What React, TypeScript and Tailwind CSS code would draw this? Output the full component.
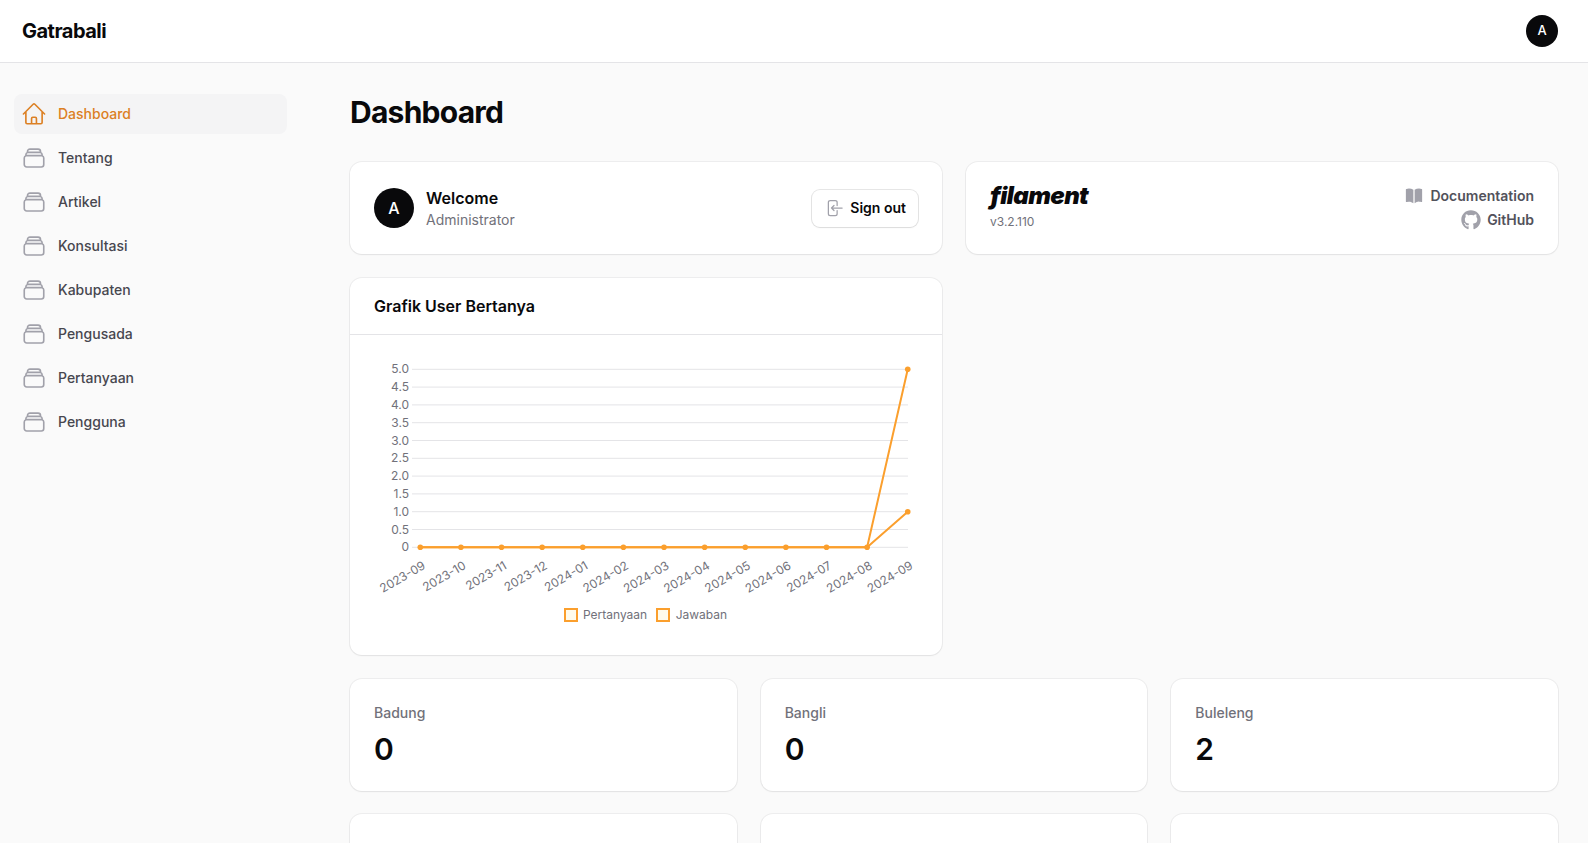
import { FaGithub } from 'react-icons/fa'

const navItems = ['Tentang', 'Artikel', 'Konsultasi', 'Kabupaten', 'Pengusada', 'Pertanyaan', 'Pengguna']

const stats = [
  { label: 'Badung', value: '0' },
  { label: 'Bangli', value: '0' },
  { label: 'Buleleng', value: '2' },
]

const months = [
  '2023-09', '2023-10', '2023-11', '2023-12', '2024-01', '2024-02', '2024-03',
  '2024-04', '2024-05', '2024-06', '2024-07', '2024-08', '2024-09',
]

const yTicks = ['5.0', '4.5', '4.0', '3.5', '3.0', '2.5', '2.0', '1.5', '1.0', '0.5', '0']

const ORANGE = '#fb9f2d'
const xAt = (i: number) => 420.3 + i * 40.62
const yAt = (v: number) => 547.3 - v * 35.6

function StackIcon() {
  return (
    <svg className="w-[26px] h-[26px] shrink-0 text-[#a1a1aa]" fill="none" viewBox="0 0 24 24" stroke="currentColor" strokeWidth={1.5}>
      <path strokeLinecap="round" strokeLinejoin="round" d="M6 6.878V6a2.25 2.25 0 0 1 2.25-2.25h7.5A2.25 2.25 0 0 1 18 6v.878m-12 0c.235-.083.487-.128.75-.128h10.5c.263 0 .515.045.75.128m-12 0A2.25 2.25 0 0 0 4.5 9v.878m13.5-3A2.25 2.25 0 0 1 19.5 9v.878m0 0a2.246 2.246 0 0 0-.75-.128H5.25c-.263 0-.515.045-.75.128m15 0A2.25 2.25 0 0 1 21 12v6a2.25 2.25 0 0 1-2.25 2.25H5.25A2.25 2.25 0 0 1 3 18v-6c0-.98.626-1.813 1.5-2.122" />
    </svg>
  )
}

function Chart() {
  const flat = months.slice(0, 12).map((_, i) => `${xAt(i)},${yAt(0)}`)
  const line = (last: number) => [...flat, `${xAt(12)},${yAt(last)}`].join(' ')

  return (
    <svg viewBox="374 359 544 272" className="block w-[544px] h-[272px]" style={{ fontFamily: 'Inter, sans-serif' }}>
      {yTicks.map((label, i) => {
        const y = 369.3 + i * 17.8
        return (
          <g key={label}>
            <line x1={412} x2={908} y1={y} y2={y} stroke="#e4e4e7" strokeWidth={1} />
            <text x={409} y={y + 4} textAnchor="end" fontSize={12} fill="#71717a">{label}</text>
          </g>
        )
      })}
      {months.map((m, i) => (
        <text key={i} x={xAt(i) + 6} y={568} textAnchor="end" fontSize={12} fill="#71717a" transform={`rotate(-30 ${xAt(i) + 6} 568)`}>
          {m}
        </text>
      ))}
      <polyline points={line(1)} fill="none" stroke={ORANGE} strokeWidth={2} />
      <polyline points={line(5)} fill="none" stroke={ORANGE} strokeWidth={2} />
      {months.slice(0, 12).map((_, i) => (
        <circle key={i} cx={xAt(i)} cy={yAt(0)} r={2.8} fill={ORANGE} />
      ))}
      <circle cx={xAt(12)} cy={yAt(1)} r={2.8} fill={ORANGE} />
      <circle cx={xAt(12)} cy={yAt(5)} r={2.8} fill={ORANGE} />

      <rect x={565} y={609} width={12} height={12} fill="#fffbeb" stroke={ORANGE} strokeWidth={2} />
      <text x={583} y={619} fontSize={12} fill="#71717a">Pertanyaan</text>
      <rect x={657} y={609} width={12} height={12} fill="#fffbeb" stroke={ORANGE} strokeWidth={2} />
      <text x={675.7} y={619} fontSize={12} fill="#71717a">Jawaban</text>
    </svg>
  )
}

export default function App() {
  return (
    <div className="h-screen overflow-hidden bg-[#fafafa] text-[#09090b] font-['Inter',sans-serif]">
      {/* Topbar */}
      <header className="h-[63px] bg-white border-b border-[#e4e4e7] flex items-center justify-between pl-[22px] pr-[30px]">
        <div className="text-xl font-bold tracking-tight">Gatrabali</div>
        <div className="w-8 h-8 rounded-full bg-[#09090b] text-white flex items-center justify-center text-[13px] font-medium">A</div>
      </header>

      <div className="flex">
        {/* Sidebar */}
        <aside className="w-[320px] shrink-0 pl-[14px] pr-[33px] pt-[31px]">
          <nav className="flex flex-col gap-1">
            <a className="h-10 rounded-lg bg-[#f4f4f5] flex items-center gap-[11px] px-[7px] text-sm font-medium text-[#dc8024]">
              <svg className="w-[26px] h-[26px] shrink-0" fill="none" viewBox="0 0 24 24" stroke="currentColor" strokeWidth={1.5}>
                <path strokeLinecap="round" strokeLinejoin="round" d="m2.25 12 8.954-8.955c.44-.439 1.152-.439 1.591 0L21.75 12M4.5 9.75v10.125c0 .621.504 1.125 1.125 1.125H9.75v-4.875c0-.621.504-1.125 1.125-1.125h2.25c.621 0 1.125.504 1.125 1.125V21h4.125c.621 0 1.125-.504 1.125-1.125V9.75M8.25 21h8.25" />
              </svg>
              Dashboard
            </a>
            {navItems.map((item) => (
              <a key={item} className="h-10 rounded-lg flex items-center gap-[11px] px-[7px] text-sm font-medium text-[#47474f]">
                <StackIcon />
                {item}
              </a>
            ))}
          </nav>
        </aside>

        {/* Main */}
        <main className="flex-1 min-w-0 px-[30px] pt-[31px]">
          <h1 className="text-3xl font-bold tracking-tight mb-8">Dashboard</h1>

          <div className="grid grid-cols-2 gap-x-6 gap-y-6">
            {/* Account widget */}
            <section className="h-[92px] bg-white rounded-xl shadow-xs ring-1 ring-[#09090b]/5 px-6 flex items-center gap-3">
              <div className="w-10 h-10 rounded-full bg-[#09090b] text-white flex items-center justify-center text-base font-medium">A</div>
              <div className="flex-1">
                <div className="text-base font-semibold leading-6">Welcome</div>
                <div className="text-sm text-[#71717a] leading-5">Administrator</div>
              </div>
              <button className="h-[37px] px-3 rounded-lg bg-white ring-1 ring-[#09090b]/10 shadow-xs flex items-center gap-[6px] text-sm font-semibold">
                <svg className="w-5 h-5 text-[#a1a1aa]" fill="none" viewBox="0 0 24 24" stroke="currentColor" strokeWidth={1.5}>
                  <path strokeLinecap="round" strokeLinejoin="round" d="M15.75 9V5.25A2.25 2.25 0 0 0 13.5 3h-6a2.25 2.25 0 0 0-2.25 2.25v13.5A2.25 2.25 0 0 0 7.5 21h6a2.25 2.25 0 0 0 2.25-2.25V15M12 9l-3 3m0 0 3 3m-3-3h12.75" />
                </svg>
                Sign out
              </button>
            </section>

            {/* Filament info widget */}
            <section className="h-[92px] bg-white rounded-xl shadow-xs ring-1 ring-[#09090b]/5 px-6 flex items-center justify-between">
              <div className="-mt-[5px]">
                <div className="text-2xl leading-7 font-black italic tracking-tight">filament</div>
                <div className="text-xs text-[#71717a] mt-1">v3.2.110</div>
              </div>
              <div className="flex flex-col items-end gap-1 text-sm font-semibold text-[#52525b]">
                <a className="flex items-center gap-[6px] h-5">
                  <svg className="w-5 h-5 text-[#a1a1aa]" viewBox="0 0 24 24" fill="currentColor">
                    <path d="M11.25 4.533A9.707 9.707 0 0 0 6 3a9.735 9.735 0 0 0-3.25.555.75.75 0 0 0-.5.707v14.25a.75.75 0 0 0 1 .707A8.237 8.237 0 0 1 6 18.75c1.995 0 3.823.707 5.25 1.886V4.533ZM12.75 20.636A8.214 8.214 0 0 1 18 18.75c.966 0 1.89.166 2.75.47a.75.75 0 0 0 1-.708V4.262a.75.75 0 0 0-.5-.707A9.735 9.735 0 0 0 18 3a9.707 9.707 0 0 0-5.25 1.533v16.103Z" />
                  </svg>
                  Documentation
                </a>
                <a className="flex items-center gap-[6px] h-5">
                  <FaGithub className="w-5 h-5 text-[#a1a1aa]" />
                  GitHub
                </a>
              </div>
            </section>

            {/* Chart */}
            <section className="bg-white rounded-xl shadow-xs ring-1 ring-[#09090b]/5">
              <div className="h-[57px] px-6 flex items-center border-b border-[#e4e4e7] text-base font-semibold">Grafik User Bertanya</div>
              <div className="p-6">
                <Chart />
              </div>
            </section>
          </div>

          {/* Stats */}
          <div className="grid grid-cols-3 gap-x-6 gap-y-[23px] mt-6">
            {stats.map((s) => (
              <div key={s.label} className="h-[112px] bg-white rounded-xl shadow-xs ring-1 ring-[#09090b]/5 p-6">
                <div className="text-sm font-medium leading-5 text-[#71717a]">{s.label}</div>
                <div className="text-3xl font-semibold leading-9 mt-2 tracking-tight">{s.value}</div>
              </div>
            ))}
            <div className="h-[112px] bg-white rounded-xl shadow-xs ring-1 ring-[#09090b]/5" />
            <div className="h-[112px] bg-white rounded-xl shadow-xs ring-1 ring-[#09090b]/5" />
            <div className="h-[112px] bg-white rounded-xl shadow-xs ring-1 ring-[#09090b]/5" />
          </div>
        </main>
      </div>
    </div>
  )
}
